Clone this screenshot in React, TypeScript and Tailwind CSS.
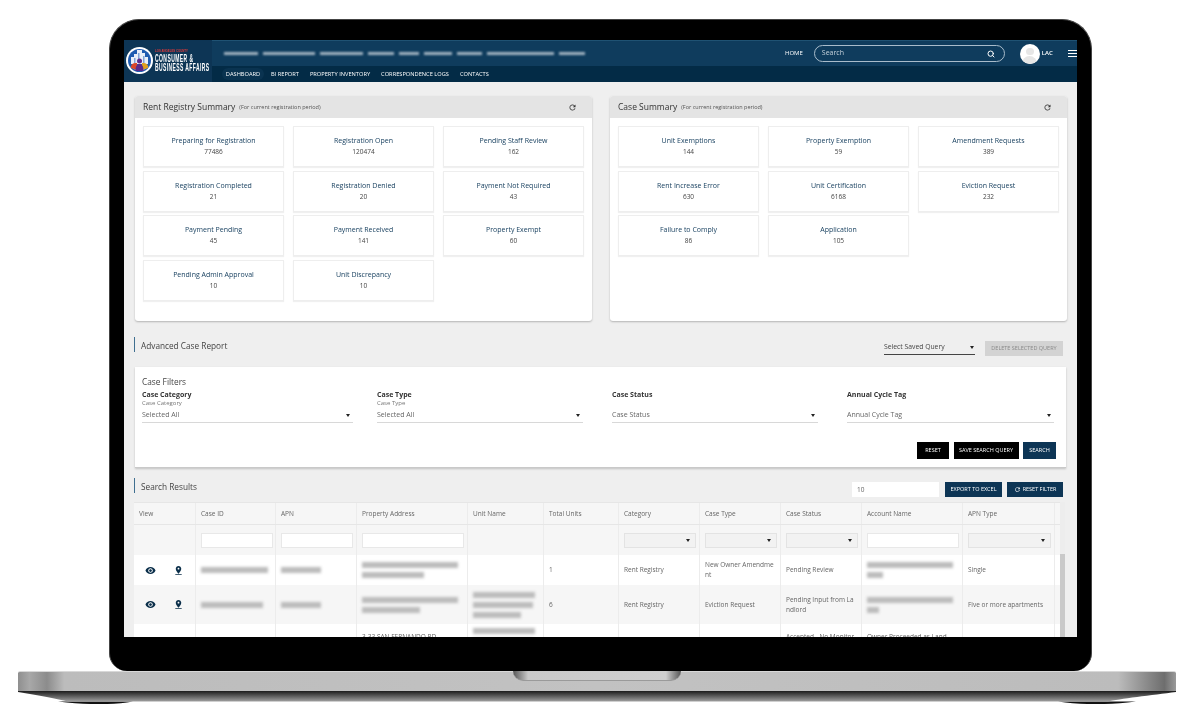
import type { ReactNode } from 'react'
import { Search } from 'lucide-react'

type Stat = { label: string; value: string }

const rentStats: Stat[] = [
  { label: 'Preparing for Registration', value: '77486' },
  { label: 'Registration Open', value: '120474' },
  { label: 'Pending Staff Review', value: '162' },
  { label: 'Registration Completed', value: '21' },
  { label: 'Registration Denied', value: '20' },
  { label: 'Payment Not Required', value: '43' },
  { label: 'Payment Pending', value: '45' },
  { label: 'Payment Received', value: '141' },
  { label: 'Property Exempt', value: '60' },
  { label: 'Pending Admin Approval', value: '10' },
  { label: 'Unit Discrepancy', value: '10' },
]

const caseStats: Stat[] = [
  { label: 'Unit Exemptions', value: '144' },
  { label: 'Property Exemption', value: '59' },
  { label: 'Amendment Requests', value: '389' },
  { label: 'Rent Increase Error', value: '630' },
  { label: 'Unit Certification', value: '6168' },
  { label: 'Eviction Request', value: '232' },
  { label: 'Failure to Comply', value: '86' },
  { label: 'Application', value: '105' },
]

const headerBars = [40, 60, 50, 30, 24, 32, 30, 78, 30]

function RefreshIcon({ className }: { className: string }) {
  return (
    <svg viewBox="0 0 24 24" className={className} fill="currentColor">
      <path d="M17.65 6.35C16.2 4.9 14.21 4 12 4c-4.42 0-7.99 3.58-7.99 8s3.57 8 7.99 8c3.73 0 6.84-2.55 7.73-6h-2.08c-.82 2.33-3.04 4-5.65 4-3.31 0-6-2.69-6-6s2.69-6 6-6c1.66 0 3.14.69 4.22 1.78L13 11h7V4l-2.35 2.35z" />
    </svg>
  )
}

function EyeIcon() {
  return (
    <svg viewBox="0 0 24 24" className="w-[11px] h-[11px] text-[#0b2f4a]" fill="currentColor">
      <path d="M12 4.5C7 4.5 2.73 7.61 1 12c1.73 4.39 6 7.5 11 7.5s9.27-3.11 11-7.5c-1.73-4.39-6-7.5-11-7.5zM12 17c-2.76 0-5-2.24-5-5s2.24-5 5-5 5 2.24 5 5-2.24 5-5 5zm0-8c-1.66 0-3 1.34-3 3s1.34 3 3 3 3-1.34 3-3-1.34-3-3-3z" />
    </svg>
  )
}

function PinIcon() {
  return (
    <svg viewBox="0 0 24 24" className="w-[11px] h-[11px] text-[#0b2f4a]" fill="currentColor">
      <path d="M18 8c0-3.31-2.69-6-6-6S6 4.69 6 8c0 4.5 6 11 6 11s6-6.5 6-11zm-8 0c0-1.1.9-2 2-2s2 .9 2 2-.89 2-2 2c-1.1 0-2-.9-2-2zM5 20v2h14v-2H5z" />
    </svg>
  )
}

function Caret() {
  return <span className="shrink-0 w-0 h-0 border-x-[2.500px] border-x-transparent border-t-[3px] border-t-[#222]" />
}

// redacted text in the table, drawn as soft grey bars
function Smudge({ widths }: { widths: number[] }) {
  return (
    <div className="flex flex-col gap-[4px]">
      {widths.map((w, i) => (
        <div key={i} className="h-[6px] bg-[#bcbcbc] blur-[1.500px]" style={{ width: w }} />
      ))}
    </div>
  )
}

function Logo() {
  return (
    <svg width="86" height="34" viewBox="0 0 86 34" className="overflow-visible">
      <circle cx="13.500" cy="16.500" r="13.500" fill="#fff" />
      <circle cx="13.500" cy="16.500" r="11.500" fill="#1f5cb0" />
      <path d="M5 20v-7h3v-3h3V6h5v3h3v4h3v7z" fill="#e8eef8" />
      <path d="M8 14h1.500v5H8zM12 9h1.500v9H12zM17 12h1.500v7H17z" fill="#7fa3d8" />
      <path d="M4.500 22h18a11.500 11.500 0 0 1-18 0z" fill="#fff" />
      <path d="M5 24a4 4 0 0 1 4-5h2v7z" fill="#d9472b" />
      <path d="M22 24a4 4 0 0 0-4-5h-2v7z" fill="#e0a020" />
      <circle cx="13.500" cy="17" r="2.500" fill="#5b2a8c" />
      <path d="M9.500 27c0-5 1.500-7 4-7s4 2 4 7z" fill="#5b2a8c" />
      <text x="29" y="8" fontSize="4" fontWeight="700" fill="#e03a3a" fontFamily="Liberation Sans" textLength="33" lengthAdjust="spacingAndGlyphs">LOS ANGELES COUNTY</text>
      <g transform="translate(29 0) scale(0.5 1)">
        <text x="0" y="18" fontSize="10" fontWeight="700" fill="#fff" fontFamily="Liberation Sans" textLength="76" lengthAdjust="spacing">CONSUMER &amp;</text>
        <text x="0" y="27.500" fontSize="10" fontWeight="700" fill="#fff" fontFamily="Liberation Sans" textLength="108" lengthAdjust="spacing">BUSINESS AFFAIRS</text>
      </g>
    </svg>
  )
}

function TopBar() {
  return (
    <div className="flex h-[42px] bg-[#032b46]">
      <div className="w-[88px] shrink-0 bg-[#0d3555] flex items-center pl-[2px]">
        <Logo />
      </div>
      <div className="flex-1 flex flex-col">
        <div className="h-[26px] bg-[#0f3c5d] border-t border-[#1f5273] flex items-center pl-[12px]">
          <div className="flex gap-[5px] w-[361px]">
            {headerBars.map((w, i) => (
              <div key={i} className="h-[3px] bg-[#9fb1bf] blur-[1px]" style={{ width: w }} />
            ))}
          </div>
          <span className="ml-[200px] text-[6px] text-white">HOME</span>
          <div className="ml-[11px] w-[191px] h-[17px] rounded-full border border-[#a9bccb] flex items-center justify-between pl-[7px] pr-[9px]">
            <span className="text-[7px] text-[#c5d2dc]">Search</span>
            <Search className="w-[8px] h-[8px] text-white" strokeWidth={3} />
          </div>
          <div className="ml-[15px] w-[20px] h-[20px] rounded-full bg-white overflow-hidden flex flex-col items-center">
            <div className="mt-[4px] w-[8px] h-[8px] rounded-full bg-[#e6e6e6]" />
            <div className="mt-[1px] w-[15px] h-[8px] rounded-t-full bg-[#e6e6e6]" />
          </div>
          <span className="ml-[2px] text-[6px] font-semibold text-white">LAC</span>
          <div className="ml-[15px] w-[9px] flex flex-col gap-[2px]">
            <div className="h-px bg-white" />
            <div className="h-px bg-white" />
            <div className="h-px bg-white" />
          </div>
        </div>
        <div className="h-[16px] flex items-center gap-[11px] text-[5.700px] text-white pl-[10px]">
          <span className="-mr-[4px] w-[42px] h-[12px] leading-[12px] text-center rounded-[6px] bg-[#0a3350]">DASHBOARD</span>
          <span>BI REPORT</span>
          <span>PROPERTY INVENTORY</span>
          <span>CORRESPONDENCE LOGS</span>
          <span>CONTACTS</span>
        </div>
      </div>
    </div>
  )
}

function SummaryPanel({ title, stats }: { title: string; stats: Stat[] }) {
  return (
    <div className="w-[457px] h-[225px] bg-white rounded-[3px] shadow-[0_1px_2px_rgba(0,0,0,0.25)]">
      <div className="h-[22px] bg-[#e4e4e4] rounded-t-[3px] flex items-center pl-[8px] pr-[15px]">
        <span className="text-[8.500px] text-[#333]">{title}</span>
        <span className="ml-[4px] text-[5.500px] text-[#555]">(For current registration period)</span>
        <RefreshIcon className="ml-auto w-[9px] h-[9px] text-[#333]" />
      </div>
      <div className="grid grid-cols-[141px_141px_141px] gap-x-[9px] gap-y-[3.500px] pt-[8px] pl-[8px]">
        {stats.map(s => (
          <div key={s.label} className="h-[41px] border border-[#eeeeee] shadow-[0_1px_1px_rgba(0,0,0,0.06)] flex flex-col items-center pt-[8px] text-center">
            <span className="text-[7px] leading-[11px] text-[#1a4261]">{s.label}</span>
            <span className="text-[6.500px] leading-[11px] text-[#444]">{s.value}</span>
          </div>
        ))}
      </div>
    </div>
  )
}

function FilterField({ label, sub, value, width }: { label: string; sub?: string; value: string; width: string }) {
  return (
    <div className={width}>
      <div className="text-[7px] leading-[9px] font-bold text-[#333]">{label}</div>
      <div className="h-[9px] text-[6px] leading-[9px] text-[#777]">{sub}</div>
      <div className="h-[15px] pt-[1px] border-b border-[#d8d8d8] flex items-center justify-between pr-[3px]">
        <span className="text-[7px] text-[#666]">{value}</span>
        <Caret />
      </div>
    </div>
  )
}

function SectionTitle({ title }: { title: string }) {
  return <div className="border-l-[1.500px] border-[#3f6f90] pl-[6px] h-[15px] text-[8.250px] leading-[17px] text-[#444]">{title}</div>
}

const headers = ['View', 'Case ID', 'APN', 'Property Address', 'Unit Name', 'Total Units', 'Category', 'Case Type', 'Case Status', 'Account Name', 'APN Type', '']
const cols = 'grid grid-cols-[62px_80px_81px_111px_76px_75px_81px_81px_81px_101px_92px_20px]'

function InputBox({ w }: { w: string }) {
  return <div className={`${w} shrink-0 h-[15px] bg-white border border-[#e8e8e8]`} />
}

function SelectBox({ w }: { w: string }) {
  return (
    <div className={`${w} shrink-0 h-[15px] bg-[#f2f2f2] border border-[#e3e3e3] flex items-center justify-end pr-[5px]`}>
      <Caret />
    </div>
  )
}

function Cell({ children, className }: { children?: ReactNode; className?: string }) {
  return <div className={`border-r border-[#ececec] flex items-center px-[5px] text-[6.500px] leading-[10px] text-[#666] break-all overflow-hidden ${className ?? ''}`}>{children}</div>
}

function ViewCell() {
  return (
    <Cell className="gap-[17px] pl-[11px]">
      <EyeIcon />
      <PinIcon />
    </Cell>
  )
}

function ResultsTable() {
  return (
    <div className="relative h-[135px] overflow-hidden">
      <div className={`${cols} h-[23px] bg-[#f6f6f6] border-t border-b border-[#e6e6e6]`}>
        {headers.map((h, i) => (
          <Cell key={i}>{h}</Cell>
        ))}
      </div>
      <div className={`${cols} h-[30px] bg-[#f6f6f6]`}>
        <Cell />
        <Cell className="px-[3px]"><InputBox w="w-[72px]" /></Cell>
        <Cell className="px-[4px]"><InputBox w="w-[72px]" /></Cell>
        <Cell className="px-[4px]"><InputBox w="w-[102px]" /></Cell>
        <Cell />
        <Cell />
        <Cell className="px-[4px]"><SelectBox w="w-[72px]" /></Cell>
        <Cell className="px-[4px]"><SelectBox w="w-[72px]" /></Cell>
        <Cell className="px-[4px]"><SelectBox w="w-[72px]" /></Cell>
        <Cell className="px-[4px]"><InputBox w="w-[92px]" /></Cell>
        <Cell className="px-[4px]"><SelectBox w="w-[83px]" /></Cell>
        <Cell className="px-[4px]"><SelectBox w="w-[16px]" /></Cell>
      </div>
      <div className={`${cols} h-[30px] bg-white`}>
        <ViewCell />
        <Cell><Smudge widths={[67]} /></Cell>
        <Cell><Smudge widths={[40]} /></Cell>
        <Cell><Smudge widths={[96, 62]} /></Cell>
        <Cell />
        <Cell>1</Cell>
        <Cell>Rent Registry</Cell>
        <Cell>New Owner Amendment</Cell>
        <Cell>Pending Review</Cell>
        <Cell><Smudge widths={[86, 16]} /></Cell>
        <Cell>Single</Cell>
        <Cell />
      </div>
      <div className={`${cols} h-[39px] bg-[#f6f6f6]`}>
        <ViewCell />
        <Cell><Smudge widths={[62]} /></Cell>
        <Cell><Smudge widths={[40]} /></Cell>
        <Cell><Smudge widths={[96, 58]} /></Cell>
        <Cell><Smudge widths={[62, 60, 48]} /></Cell>
        <Cell>6</Cell>
        <Cell>Rent Registry</Cell>
        <Cell>Eviction Request</Cell>
        <Cell>Pending Input from Landlord</Cell>
        <Cell><Smudge widths={[86, 12]} /></Cell>
        <Cell>Five or more apartments</Cell>
        <Cell />
      </div>
      <div className={`${cols} h-[43px] bg-white`}>
        <Cell />
        <Cell />
        <Cell />
        <Cell className="items-start pt-[8px] text-[#444]">3-33 SAN FERNANDO RD</Cell>
        <Cell className="items-start pt-[4px]"><Smudge widths={[62, 60]} /></Cell>
        <Cell />
        <Cell />
        <Cell />
        <Cell className="items-start pt-[8px]">Accepted - No Monitor</Cell>
        <Cell className="items-start pt-[8px]">Owner Proceeded as Land</Cell>
        <Cell />
        <Cell />
      </div>
      <div className="absolute right-0 top-0 bottom-0 w-[5px] bg-[#ededed]">
        <div className="mt-[52px] h-[90px] bg-[#c9c9c9]" />
      </div>
    </div>
  )
}

function Screen() {
  return (
    <div className="w-[953px] h-[597px] bg-[#efefef] overflow-hidden blur-[0.3px]">
      <TopBar />
      <div className="flex gap-[18px] pl-[11px] pt-[14px]">
        <SummaryPanel title="Rent Registry Summary" stats={rentStats} />
        <SummaryPanel title="Case Summary" stats={caseStats} />
      </div>

      <div className="flex items-start pl-[10px] pr-[14px] mt-[16px] h-[20px]">
        <SectionTitle title="Advanced Case Report" />
        <div className="ml-auto mt-[3px] w-[91px] h-[15px] border-b border-[#444] flex items-center justify-between pr-[1px] text-[6.800px] text-[#444]">
          Select Saved Query
          <Caret />
        </div>
        <div className="ml-[10px] mt-[4px] w-[78px] h-[15px] bg-[#d3d3d3] flex items-center justify-center text-[5.500px] text-[#8a8a8a]">
          DELETE SELECTED QUERY
        </div>
      </div>

      <div className="ml-[11px] mt-[10px] w-[931px] h-[101px] bg-white border-b border-[#c9c9c9] shadow-[0_1px_2px_rgba(0,0,0,0.2)] pl-[7px] pt-[9px]">
        <div className="text-[8.300px] leading-[11px] text-[#444]">Case Filters</div>
        <div className="grid grid-cols-[235px_235px_235px_207px] mt-[3px]">
          <FilterField label="Case Category" sub="Case Category" value="Selected All" width="w-[211px]" />
          <FilterField label="Case Type" sub="Case Type" value="Selected All" width="w-[206px]" />
          <FilterField label="Case Status" value="Case Status" width="w-[206px]" />
          <FilterField label="Annual Cycle Tag" value="Annual Cycle Tag" width="w-[207px]" />
        </div>
        <div className="flex justify-end gap-[4.500px] pr-[10px] mt-[19px] text-[5.500px] text-white">
          <div className="w-[32px] h-[17px] bg-black flex items-center justify-center">RESET</div>
          <div className="w-[65px] h-[17px] bg-black flex items-center justify-center">SAVE SEARCH QUERY</div>
          <div className="w-[33px] h-[17px] bg-[#0d3555] flex items-center justify-center">SEARCH</div>
        </div>
      </div>

      <div className="flex items-start pl-[10px] pr-[14px] mt-[10px] h-[24px]">
        <SectionTitle title="Search Results" />
        <div className="ml-auto mt-[4px] w-[87px] h-[15px] bg-white flex items-center pl-[5px] text-[6.500px] text-[#666]">10</div>
        <div className="ml-[6px] mt-[4px] w-[57px] h-[15px] bg-[#0d3555] flex items-center justify-center text-[5.500px] text-white">EXPORT TO EXCEL</div>
        <div className="ml-[5px] mt-[4px] w-[56px] h-[15px] bg-[#0d3555] flex items-center justify-center gap-[2px] text-[5.500px] text-white">
          <RefreshIcon className="w-[7px] h-[7px]" />
          RESET FILTER
        </div>
      </div>

      <div className="ml-[10px] mr-[12px]">
        <ResultsTable />
      </div>
    </div>
  )
}

function LaptopBase() {
  return (
    <div className="relative w-[1158px]">
      <div className="relative h-[20px] bg-[linear-gradient(90deg,#8f8f8f_0%,#a8a8a8_1%,#8c8c8c_2.500%,#bcbcbc_4%,#c2c2c2_50%,#bcbcbc_95%,#8a8a8a_97.500%,#6e6e6e_99%,#9a9a9a_100%)] border-t border-[#d8d8d8] rounded-tl-[2px] rounded-tr-[2px]">
        <div className="absolute left-[495px] top-[-1px] w-[168px] h-[10px] rounded-b-[10px] bg-[linear-gradient(90deg,#555_0%,#c9c9c9_9%,#cfcfcf_91%,#555_100%)] border-b border-[#9a9a9a]" />
      </div>
      <svg width="1158" height="13" viewBox="0 0 1158 13" className="block">
        <defs>
          <linearGradient id="under" x1="0" y1="0" x2="0" y2="1">
            <stop offset="0" stopColor="#1c1c1c" />
            <stop offset="1" stopColor="#a0a0a0" />
          </linearGradient>
        </defs>
        <path d="M40 10.500C70 14 95 14 115 10.500zM1040 10.500C1065 14 1090 14 1118 10.500z" fill="#111" />
        <path d="M0 0H1158V1C1135 4 1100 8 1090 10.500H50C40 8 20 4 0 1z" fill="url(#under)" />
      </svg>
    </div>
  )
}

export default function App() {
  return (
    <div className="w-[1200px] h-[727px] bg-white overflow-hidden pt-[19px] flex flex-col items-center font-['Open_Sans',sans-serif]">
      <div className="w-[983px] h-[652px] ml-[1px] bg-black rounded-t-[30px] rounded-b-[18px] border-t border-x border-[#444] pt-[20px] pl-[14px] shrink-0">
        <Screen />
      </div>
      <div className="-ml-[6px]">
        <LaptopBase />
      </div>
    </div>
  )
}
